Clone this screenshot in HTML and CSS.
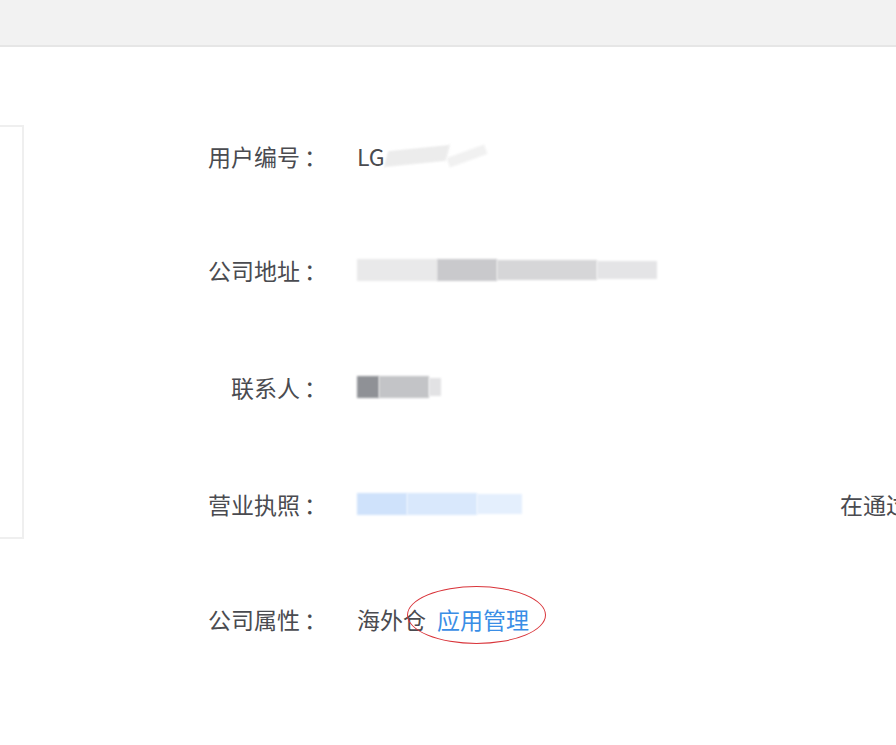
FILE: index.html
```html
<!DOCTYPE html>
<html lang="zh">
<head>
<meta charset="utf-8">
<link rel="stylesheet" href="styles.css">
</head>
<body>
<div class="topbar"></div>
<div class="main">
  <div class="side-box"></div>
  <div class="info">
    <div class="row">
      <div class="label">用户编号<span class="colon">：</span></div>
      <div class="value"><span class="txt">LG</span><span class="smear s1a"></span><span class="smear s1b"></span></div>
    </div>
    <div class="row">
      <div class="label">公司地址<span class="colon">：</span></div>
      <div class="value"><span class="smear s2a"></span><span class="smear s2b"></span><span class="smear s2c"></span><span class="smear s2d"></span></div>
    </div>
    <div class="row">
      <div class="label">联系人<span class="colon">：</span></div>
      <div class="value"><span class="smear s3a"></span><span class="smear s3b"></span><span class="smear s3c"></span></div>
    </div>
    <div class="row">
      <div class="label">营业执照<span class="colon">：</span></div>
      <div class="value"><span class="smear s4a"></span><span class="smear s4b"></span><span class="smear s4c"></span></div>
      <div class="extra">在通过审核</div>
    </div>
    <div class="row">
      <div class="label">公司属性<span class="colon">：</span></div>
      <div class="value"><span class="txt">海外仓</span><span class="link-wrap"><a class="link">应用管理</a><span class="ring"></span></span></div>
    </div>
  </div>
</div>
</body>
</html>
```
FILE: styles.css
```css
html, body {
  margin: 0;
  padding: 0;
  background: #ffffff;
  overflow: hidden;
  width: 896px;
  height: 745px;
}
body {
  font-family: "Noto Sans CJK SC", "Noto Sans", sans-serif;
  color: #4a4b50;
}
.topbar {
  height: 45px;
  background: #f2f2f2;
  border-bottom: 2px solid #e6e6e6;
}
.main {
  display: flex;
  padding-top: 78px;
}
.side-box {
  flex: 0 0 auto;
  width: 22px;
  height: 410px;
  border: 2px solid #efefef;
  border-left: none;
}
.info {
  margin-left: 184px;
  padding-top: 15px;
  flex: 1;
  min-width: 0;
}
.row {
  display: flex;
  align-items: center;
  height: 32px;
  font-size: 23px;
  line-height: 32px;
  white-space: nowrap;
}
.row:nth-child(1) { margin-bottom: 82px; }
.row:nth-child(2) { margin-bottom: 85px; }
.row:nth-child(3) { margin-bottom: 85px; }
.row:nth-child(4) { margin-bottom: 83px; }
.label {
  flex: 0 0 115px;
  text-align: right;
}
.colon {
  display: inline-block;
  width: 23px;
  box-sizing: border-box;
  padding-left: 4px;
  text-align: left;
}
.value {
  flex: 0 0 483px;
  margin-left: 34px;
  display: flex;
  align-items: center;
  position: relative;
}
.extra {
  flex: 0 0 auto;
}
.txt { color: #4a4b50; }
.link-wrap {
  position: relative;
  margin-left: 11px;
}
.link {
  color: #3a8ee6;
  text-decoration: none;
}
.ring {
  position: absolute;
  left: -30px;
  top: -17px;
  width: 137px;
  height: 56px;
  border: 1px solid #d9343a;
  border-radius: 50%;
}
.smear {
  display: inline-block;
  filter: blur(1px);
}
.s1a { width: 60px; height: 16px; background: #ececec; margin-left: 2px; transform: skewX(-20deg) rotate(-6deg); }
.s1b { width: 40px; height: 10px; background: #f1f1f1; transform: rotate(-20deg); }
.s2a { width: 80px; height: 22px; background: #e9e9ea; }
.s2b { width: 60px; height: 22px; background: #c9c9cc; }
.s2c { width: 100px; height: 20px; background: #d6d6d8; }
.s2d { width: 60px; height: 18px; background: #e4e4e6; }
.s3a { width: 22px; height: 22px; background: #8f9196; }
.s3b { width: 50px; height: 22px; background: #c3c4c7; }
.s3c { width: 12px; height: 18px; background: #e2e2e4; }
.s4a { width: 50px; height: 22px; background: #cfe2fb; }
.s4b { width: 70px; height: 22px; background: #d9e8fc; }
.s4c { width: 45px; height: 20px; background: #e4effd; }
```
